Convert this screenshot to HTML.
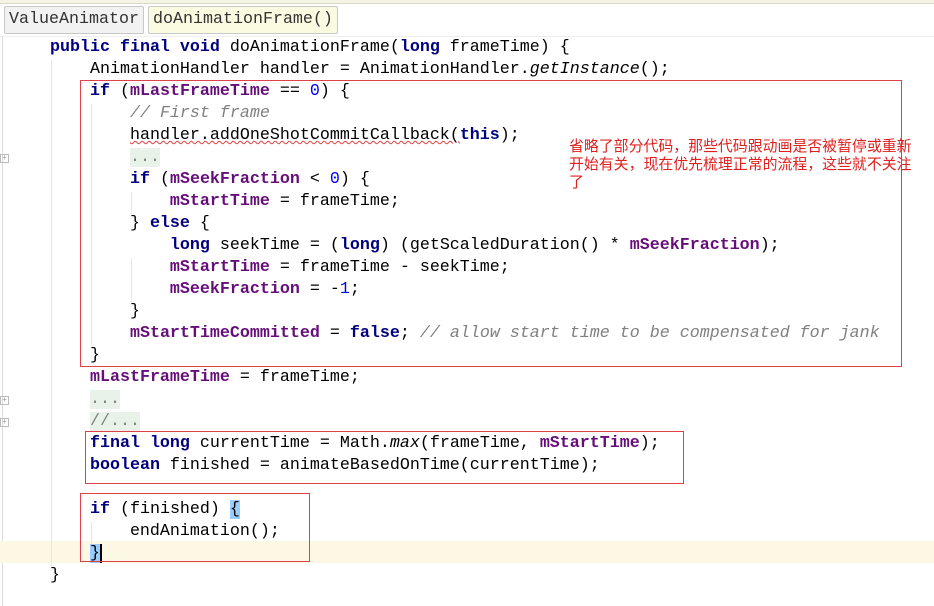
<!DOCTYPE html>
<html><head><meta charset="utf-8"><style>
body{margin:0;width:934px;height:606px;background:#fff;position:relative;overflow:hidden;font-family:"Liberation Mono","Noto Sans CJK SC",monospace}
.l{position:absolute;left:0;height:22px;line-height:22px;font-size:16.67px;white-space:pre;color:#000}
.k{color:#000080;font-weight:bold}
.f{color:#660e7a;font-weight:bold}
.n{color:#0000ff}
.c{color:#808080;font-style:italic}
.i{font-style:italic}
.g{color:#808080;background:#e8f2e8}
.box{position:absolute;border:1px solid #e0404a}
.tab{position:absolute;top:6px;height:26px;line-height:26px;font-size:16.67px;border:1px solid #c8c8c8;border-radius:2px;padding:0 4px;color:#333}
.vg{position:absolute;width:1px;background:#e6e6e6}
</style></head><body>
<div style="position:absolute;left:0;top:0;width:934px;height:3px;background:#f4f4e4;border-bottom:1px solid #d8d8c8"></div>
<div class="tab" style="left:4px;background:#f2f2f2">ValueAnimator</div>
<div class="tab" style="left:148px;background:#fbfbe2">doAnimationFrame()</div>
<div style="position:absolute;left:0;top:36px;width:934px;height:1px;background:#eee"></div>
<div style="position:absolute;left:2px;top:36px;width:1px;height:570px;background:#ddd"></div>
<div style="position:absolute;left:0;top:541px;width:934px;height:22px;background:#fdf8e4"></div>
<div class="vg" style="left:51px;top:60px;height:506px"></div>
<div class="vg" style="left:91px;top:104px;height:242px"></div>
<div class="vg" style="left:131px;top:192px;height:22px"></div>
<div class="vg" style="left:131px;top:258px;height:44px"></div>
<div class="vg" style="left:91px;top:522px;height:22px"></div>
<div style="position:absolute;left:0;top:154px;width:7px;height:7px;border:1px solid #bbb;font-size:8px;line-height:7px;color:#999;text-align:center">+</div>
<div style="position:absolute;left:0;top:396px;width:7px;height:7px;border:1px solid #bbb;font-size:8px;line-height:7px;color:#999;text-align:center">+</div>
<div style="position:absolute;left:0;top:418px;width:7px;height:7px;border:1px solid #bbb;font-size:8px;line-height:7px;color:#999;text-align:center">+</div>

<div class="l" style="top:37px">     <span class="k">public final void</span> doAnimationFrame(<span class="k">long</span> frameTime) {</div>
<div class="l" style="top:59px">         AnimationHandler handler = AnimationHandler.<span class="i">getInstance</span>();</div>
<div class="l" style="top:81px">         <span class="k">if</span> (<span class="f">mLastFrameTime</span> == <span class="n">0</span>) {</div>
<div class="l" style="top:103px">             <span class="c">// First frame</span></div>
<div class="l" style="top:125px">             <span style="text-decoration:underline wavy #e04040;text-decoration-thickness:1px">handler.addOneShotCommitCallback(</span><span class="k">this</span>);</div>
<div class="l" style="top:147px">             <span class="g">...</span></div>
<div class="l" style="top:169px">             <span class="k">if</span> (<span class="f">mSeekFraction</span> &lt; <span class="n">0</span>) {</div>
<div class="l" style="top:191px">                 <span class="f">mStartTime</span> = frameTime;</div>
<div class="l" style="top:213px">             } <span class="k">else</span> {</div>
<div class="l" style="top:235px">                 <span class="k">long</span> seekTime = (<span class="k">long</span>) (getScaledDuration() * <span class="f">mSeekFraction</span>);</div>
<div class="l" style="top:257px">                 <span class="f">mStartTime</span> = frameTime - seekTime;</div>
<div class="l" style="top:279px">                 <span class="f">mSeekFraction</span> = -<span class="n">1</span>;</div>
<div class="l" style="top:301px">             }</div>
<div class="l" style="top:323px">             <span class="f">mStartTimeCommitted</span> = <span class="k">false</span>; <span class="c">// allow start time to be compensated for jank</span></div>
<div class="l" style="top:345px">         }</div>
<div class="l" style="top:367px">         <span class="f">mLastFrameTime</span> = frameTime;</div>
<div class="l" style="top:389px">         <span class="g">...</span></div>
<div class="l" style="top:411px">         <span class="g">//...</span></div>
<div class="l" style="top:433px">         <span class="k">final long</span> currentTime = Math.<span class="i">max</span>(frameTime, <span class="f">mStartTime</span>);</div>
<div class="l" style="top:455px">         <span class="k">boolean</span> finished = animateBasedOnTime(currentTime);</div>
<div class="l" style="top:499px">         <span class="k">if</span> (finished) <span style="background:#99ccff">{</span></div>
<div class="l" style="top:521px">             endAnimation();</div>
<div class="l" style="top:543px">         <span style="background:#99ccff;border-right:2px solid #000">}</span></div>
<div class="l" style="top:565px">     }</div>

<div class="box" style="left:80px;top:80px;width:820px;height:285px"></div>
<div class="box" style="left:85px;top:431px;width:597px;height:51px"></div>
<div class="box" style="left:80px;top:493px;width:228px;height:67px"></div>

<div style="position:absolute;left:569px;top:137px;width:360px;white-space:nowrap;font-family:'Noto Sans CJK SC',sans-serif;font-size:14.9px;line-height:18px;color:#e02020">省略了部分代码，那些代码跟动画是否被暂停或重新<br>开始有关，现在优先梳理正常的流程，这些就不关注<br>了</div>
</body></html>
